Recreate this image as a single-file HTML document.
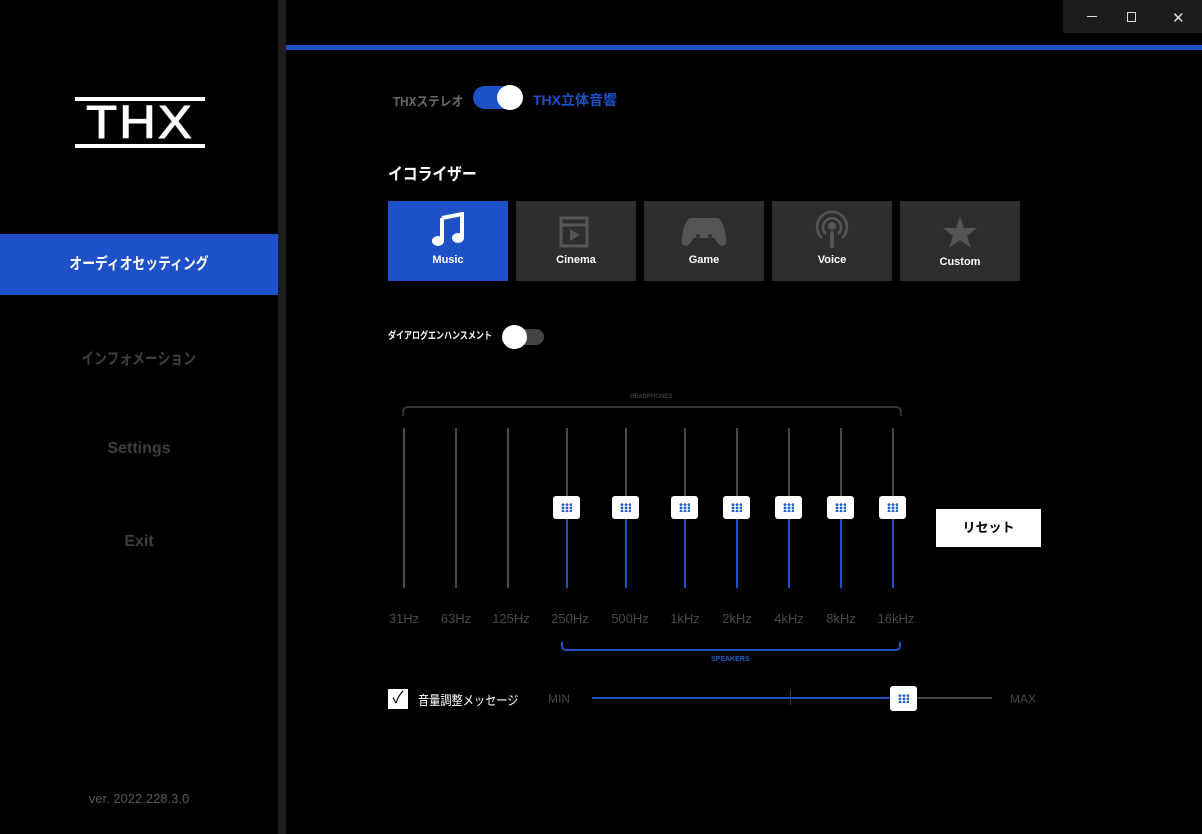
<!DOCTYPE html>
<html><head><meta charset="utf-8"><style>
*{margin:0;padding:0;box-sizing:border-box}
body{width:1202px;height:834px;background:#000;position:relative;overflow:hidden;font-family:"Liberation Sans","Noto Sans CJK JP",sans-serif;color:#fff}
.a{position:absolute}
.sep{left:278px;top:0;width:8px;height:834px;background:#1d1d1f}
.nav{left:0;width:278px;text-align:center;font-size:16px;font-weight:bold;color:#3f3f3f}
.jp{display:inline-block;transform:scaleX(0.8)}
.tile{top:201px;width:120px;height:80px;background:#2e2d30;text-align:center;font-size:11px;font-weight:bold}
.tile span{position:absolute;left:0;right:0;top:53px}
.trk{width:2px;background:#4a4a4a;top:428px;height:160px}
.blu{width:2px;background:#1e50c8}
.h{width:27px;height:23px;background:#fff;border-radius:3px;display:flex;align-items:center;justify-content:center}
.dots{width:11px;height:9px;background-image:radial-gradient(circle,#1e60c8 1.3px,transparent 1.5px);background-size:4px 3.3px}
.lbl{top:611px;font-size:13px;color:#4a4a4a;width:60px;text-align:center}
.sx{transform-origin:0 0}
</style></head><body>
<div class="a sep"></div>
<div class="a" style="left:1063px;top:0;width:139px;height:33px;background:#1c1c1c"></div>
<div class="a" style="left:1087px;top:16px;width:10px;height:1px;background:#ddd"></div>
<div class="a" style="left:1127px;top:12px;width:9px;height:10px;border:1px solid #ddd"></div>
<div class="a" style="left:1172px;top:9px;font-size:15px;color:#ddd">✕</div>
<div class="a" style="left:286px;top:45px;width:916px;height:5px;background:#1e50c8"></div>
<!-- logo -->
<div class="a" style="left:75px;top:97px;width:130px;height:4px;background:#fff"></div>
<div class="a" style="left:75px;top:144px;width:130px;height:4px;background:#fff"></div>
<div class="a" style="left:75px;top:99px;width:130px;text-align:center;font-size:46px;line-height:46px;font-family:'Liberation Sans',sans-serif;letter-spacing:2px;transform:scaleX(1.1);-webkit-text-stroke:1px #fff">THX</div>
<div class="a nav" style="top:234px;height:61px;background:#1e50c8;color:#fff;line-height:61px"><span class="jp">オーディオセッティング</span></div>
<div class="a nav" style="top:345px"><span class="jp">インフォメーション</span></div>
<div class="a nav" style="top:440px">Settings</div>
<div class="a nav" style="top:533px">Exit</div>
<div class="a" style="left:0;width:278px;text-align:center;top:791px;font-size:13px;color:#5a5a5a">ver. 2022.228.3.0</div>
<!-- toggle -->
<div class="a sx" style="left:393px;top:91px;font-size:13px;font-weight:bold;color:#6a6a6a;transform:scaleX(0.9)">THXステレオ</div>
<div class="a" style="left:473px;top:86px;width:50px;height:23px;border-radius:12px;background:#1e50c8"></div>
<div class="a" style="left:497px;top:85px;width:26px;height:25px;border-radius:50%;background:#fff"></div>
<div class="a" style="left:533px;top:90px;font-size:14px;font-weight:bold;color:#1e50c8">THX立体音響</div>
<div class="a sx" style="left:388px;top:160px;font-size:17px;font-weight:bold;transform:scaleX(0.87)">イコライザー</div>
<div class="a tile" style="left:388px;background:#1e50c8"><svg class="a" style="left:42px;top:11px" width="36" height="36" viewBox="0 0 36 36"><path d="M12 6 L32 2 V26" stroke="#fff" stroke-width="4" fill="none"/><path d="M12 6V30" stroke="#fff" stroke-width="4"/><ellipse cx="8" cy="29" rx="6" ry="5" fill="#fff"/><ellipse cx="28" cy="26" rx="6" ry="5" fill="#fff"/></svg><span>Music</span></div>
<div class="a tile" style="left:516px"><svg class="a" style="left:43px;top:15px" width="32" height="32" viewBox="0 0 32 32"><rect x="2" y="2" width="26" height="28" fill="none" stroke="#555" stroke-width="3"/><path d="M2 9H28" stroke="#555" stroke-width="3"/><path d="M11 13L21 19 11 25Z" fill="#555"/></svg><span>Cinema</span></div>
<div class="a tile" style="left:644px"><svg class="a" style="left:37px;top:15px" width="46" height="32" viewBox="0 0 46 32"><path d="M10 2H36C42 2 46 20 45 27 44 31 39 31 36 26L33 22H13L10 26C7 31 2 31 1 27 0 20 4 2 10 2Z" fill="#555"/><circle cx="17" cy="20" r="2" fill="#2e2d30"/><circle cx="29" cy="20" r="2" fill="#2e2d30"/></svg><span>Game</span></div>
<div class="a tile" style="left:772px"><svg class="a" style="left:41px;top:9px" width="38" height="40" viewBox="0 0 38 40"><path d="M9 28A15 15 0 1 1 29 28" fill="none" stroke="#555" stroke-width="2.5"/><path d="M13 24A9 9 0 1 1 25 24" fill="none" stroke="#555" stroke-width="2.5"/><circle cx="19" cy="16" r="4" fill="#555"/><rect x="17" y="21" width="4" height="17" rx="2" fill="#555"/></svg><span>Voice</span></div>
<div class="a tile" style="left:900px"><svg class="a" style="left:42px;top:14px" width="36" height="34" viewBox="0 0 36 34"><path d="M18 1L22 13H35L25 21 29 33 18 25 7 33 11 21 1 13H14Z" fill="#555"/></svg><span style="top:55px">Custom</span></div>
<div class="a sx" style="left:388px;top:327px;font-size:10px;font-weight:bold;transform:scaleX(0.8)">ダイアログエンハンスメント</div>
<div class="a" style="left:503px;top:329px;width:41px;height:16px;border-radius:8px;background:#444"></div>
<div class="a" style="left:502px;top:325px;width:25px;height:24px;border-radius:50%;background:#fff"></div>
<!-- EQ -->
<div class="a" style="left:630px;top:394px;font-size:6px;color:#3a3a3a;font-weight:bold">HEADPHONES</div>
<div class="a" style="left:402px;top:406px;width:500px;height:10px;border:2px solid #333;border-bottom:none;border-radius:6px 6px 0 0"></div>
<div class="a trk" style="left:403px"></div><div class="a trk" style="left:455px"></div><div class="a trk" style="left:507px"></div>
<div class="a trk" style="left:566px"></div><div class="a trk" style="left:625px"></div><div class="a trk" style="left:684px"></div><div class="a trk" style="left:736px"></div><div class="a trk" style="left:788px"></div><div class="a trk" style="left:840px"></div><div class="a trk" style="left:892px"></div>
<div class="a blu" style="left:566px;top:508px;height:80px"></div><div class="a blu" style="left:625px;top:508px;height:80px"></div><div class="a blu" style="left:684px;top:508px;height:80px"></div><div class="a blu" style="left:736px;top:508px;height:80px"></div><div class="a blu" style="left:788px;top:508px;height:80px"></div><div class="a blu" style="left:840px;top:508px;height:80px"></div><div class="a blu" style="left:892px;top:508px;height:80px"></div>
<div class="a h" style="left:553px;top:496px"><div class="dots"></div></div>
<div class="a h" style="left:612px;top:496px"><div class="dots"></div></div>
<div class="a h" style="left:671px;top:496px"><div class="dots"></div></div>
<div class="a h" style="left:723px;top:496px"><div class="dots"></div></div>
<div class="a h" style="left:775px;top:496px"><div class="dots"></div></div>
<div class="a h" style="left:827px;top:496px"><div class="dots"></div></div>
<div class="a h" style="left:879px;top:496px"><div class="dots"></div></div>
<div class="a" style="left:936px;top:509px;width:105px;height:38px;background:#fff;color:#000;font-size:13px;font-weight:bold;text-align:center;line-height:38px">リセット</div>
<div class="a lbl" style="left:374px">31Hz</div><div class="a lbl" style="left:426px">63Hz</div><div class="a lbl" style="left:481px">125Hz</div><div class="a lbl" style="left:540px">250Hz</div><div class="a lbl" style="left:600px">500Hz</div><div class="a lbl" style="left:655px">1kHz</div><div class="a lbl" style="left:707px">2kHz</div><div class="a lbl" style="left:759px">4kHz</div><div class="a lbl" style="left:811px">8kHz</div><div class="a lbl" style="left:866px">16kHz</div>
<div class="a" style="left:561px;top:642px;width:340px;height:9px;border:2px solid #1e50c8;border-top:none;border-radius:0 0 5px 5px"></div>
<div class="a" style="left:711px;top:656px;font-size:7px;font-weight:bold;color:#1e60c8">SPEAKERS</div>
<!-- bottom -->
<div class="a" style="left:388px;top:689px;width:20px;height:20px;background:#fff;color:#000;font-size:16px;line-height:20px;text-align:center">✓</div>
<div class="a sx" style="left:418px;top:690px;font-size:13px;transform:scaleX(0.86)">音量調整メッセージ</div>
<div class="a" style="left:548px;top:692px;font-size:12px;color:#444">MIN</div>
<div class="a" style="left:592px;top:697px;width:400px;height:2px;background:#444"></div>
<div class="a" style="left:592px;top:697px;width:312px;height:2px;background:#1e50c8"></div>
<div class="a" style="left:790px;top:690px;width:1px;height:15px;background:#444"></div>
<div class="a h" style="left:890px;top:686px;width:27px;height:25px"><div class="dots"></div></div>
<div class="a" style="left:1010px;top:692px;font-size:12px;color:#444">MAX</div>
</body></html>
